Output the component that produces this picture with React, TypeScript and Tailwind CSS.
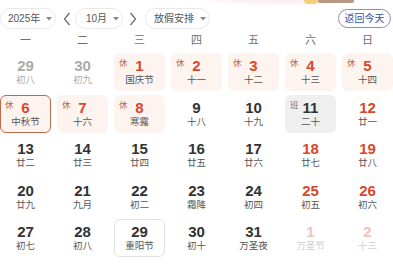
import React from "react";

type Cell = {
  d: string;
  l: string;
  kind?: "prev" | "next";
  red?: boolean;
  tag?: "休" | "班";
  sel?: boolean;
  box?: boolean;
};

const rows: Cell[][] = [
  [
    { d: "29", l: "初八", kind: "prev" },
    { d: "30", l: "初九", kind: "prev" },
    { d: "1", l: "国庆节", tag: "休", red: true },
    { d: "2", l: "十一", tag: "休", red: true },
    { d: "3", l: "十二", tag: "休", red: true },
    { d: "4", l: "十三", tag: "休", red: true },
    { d: "5", l: "十四", tag: "休", red: true },
  ],
  [
    { d: "6", l: "中秋节", tag: "休", red: true, sel: true },
    { d: "7", l: "十六", tag: "休", red: true },
    { d: "8", l: "寒露", tag: "休", red: true },
    { d: "9", l: "十八" },
    { d: "10", l: "十九" },
    { d: "11", l: "二十", tag: "班" },
    { d: "12", l: "廿一", red: true },
  ],
  [
    { d: "13", l: "廿二" },
    { d: "14", l: "廿三" },
    { d: "15", l: "廿四" },
    { d: "16", l: "廿五" },
    { d: "17", l: "廿六" },
    { d: "18", l: "廿七", red: true },
    { d: "19", l: "廿八", red: true },
  ],
  [
    { d: "20", l: "廿九" },
    { d: "21", l: "九月" },
    { d: "22", l: "初二" },
    { d: "23", l: "霜降" },
    { d: "24", l: "初四" },
    { d: "25", l: "初五", red: true },
    { d: "26", l: "初六", red: true },
  ],
  [
    { d: "27", l: "初七" },
    { d: "28", l: "初八" },
    { d: "29", l: "重阳节", box: true },
    { d: "30", l: "初十" },
    { d: "31", l: "万圣夜" },
    { d: "1", l: "万圣节", kind: "next", red: true },
    { d: "2", l: "十三", kind: "next", red: true },
  ],
];

const Caret = () => (
  <svg width="6" height="4" viewBox="0 0 6 4" className="ml-[6px] shrink-0">
    <path d="M0 0 L6 0 L3 3.5 Z" fill="#888" />
  </svg>
);

const Chevron = ({ dir }: { dir: "l" | "r" }) => (
  <svg width="8" height="14" viewBox="0 0 8 14">
    <path
      d={dir === "l" ? "M6.5 1 L1.5 7 L6.5 13" : "M1.5 1 L6.5 7 L1.5 13"}
      fill="none"
      stroke="#666"
      strokeWidth="1.2"
    />
  </svg>
);

function DayCell({ c }: { c: Cell }) {
  let bg = "bg-transparent";
  let border = "border border-transparent";
  if (c.tag === "休") bg = "bg-[#fdf4f0]";
  if (c.tag === "班") bg = "bg-[#efefef]";
  if (c.sel) border = "border-[1.5px] border-[#c0694a]";
  if (c.box) border = "border border-[#e2e2e2] bg-white";

  let numColor = "text-[#333]";
  let lunarColor = "text-[#555]";
  if (c.kind === "prev") {
    numColor = "text-[#aaa]";
    lunarColor = "text-[#aaa]";
  } else if (c.kind === "next") {
    numColor = "text-[#f0c3b4]";
    lunarColor = "text-[#cfcfcf]";
  } else if (c.red) {
    numColor = "text-[#d9472b]";
  }

  return (
    <div
      className={`relative flex h-[38px] flex-col items-center rounded-[6px] ${bg} ${border}`}
    >
      {c.tag && (
        <span
          className={`absolute left-[4px] top-[5px] text-[8.5px] leading-none ${
            c.tag === "休" ? "text-[#c0613f]" : "text-[#777]"
          }`}
        >
          {c.tag}
        </span>
      )}
      <span
        className={`mt-[4px] text-[15px] font-bold leading-[16px] ${numColor}`}
      >
        {c.d}
      </span>
      <span className={`text-[9.5px] leading-[11px] ${lunarColor}`}>{c.l}</span>
    </div>
  );
}

export default function App() {
  return (
    <div
      className="relative h-[267px] w-[393px] overflow-hidden bg-white"
      style={{ fontFamily: '"Liberation Sans", "Noto Sans CJK SC", sans-serif' }}
    >
      <div className="pointer-events-none absolute left-[190px] top-[-14px] h-[20px] w-[180px] rounded-full bg-[radial-gradient(ellipse_at_center,#fbe3ee_0%,#fdf0f5_45%,rgba(255,255,255,0)_75%)]" />
      <div className="pointer-events-none absolute left-[304px] top-[-4px] h-[8px] w-[14px] rounded-full bg-[#f5cf79]" />
      <div className="pointer-events-none absolute left-[318px] top-[-2px] h-[5px] w-[36px] rounded-[2px] bg-[#b59a84]" />

      <div className="relative flex items-center whitespace-nowrap pt-[8px]">
        <div className="flex h-[21px] w-[56px] shrink-0 items-center rounded-full border border-[#e8e8e8] pl-[7px] text-[10px] text-[#555]">
          2025年
          <Caret />
        </div>
        <div className="ml-[6px] flex w-[10px] shrink-0 justify-center">
          <Chevron dir="l" />
        </div>
        <div className="ml-[3px] flex h-[21px] w-[48px] shrink-0 items-center rounded-full border border-[#e8e8e8] pl-[10px] text-[10px] text-[#555]">
          10月
          <Caret />
        </div>
        <div className="ml-[3px] flex w-[13px] shrink-0 justify-center">
          <Chevron dir="r" />
        </div>
        <div className="ml-[6px] flex h-[21px] w-[65px] shrink-0 items-center rounded-full border border-[#e8e8e8] pl-[8px] text-[10px] text-[#555]">
          放假安排
          <Caret />
        </div>
        <div className="ml-auto mr-[2px] flex h-[19px] w-[53px] shrink-0 items-center justify-center rounded-full border border-[#8592bf] text-[10px] text-[#3453a8]">
          返回今天
        </div>
      </div>

      <div className="mt-[4px] grid grid-cols-7 gap-x-[6px]">
        {["一", "二", "三", "四", "五", "六", "日"].map((w) => (
          <div key={w} className="text-center text-[11px] leading-[15px] text-[#707070]">
            {w}
          </div>
        ))}
      </div>

      <div className="mt-[5px] grid grid-cols-7 gap-x-[6px] gap-y-[3.5px]">
        {rows.flat().map((c, i) => (
          <DayCell key={i} c={c} />
        ))}
      </div>
    </div>
  );
}
